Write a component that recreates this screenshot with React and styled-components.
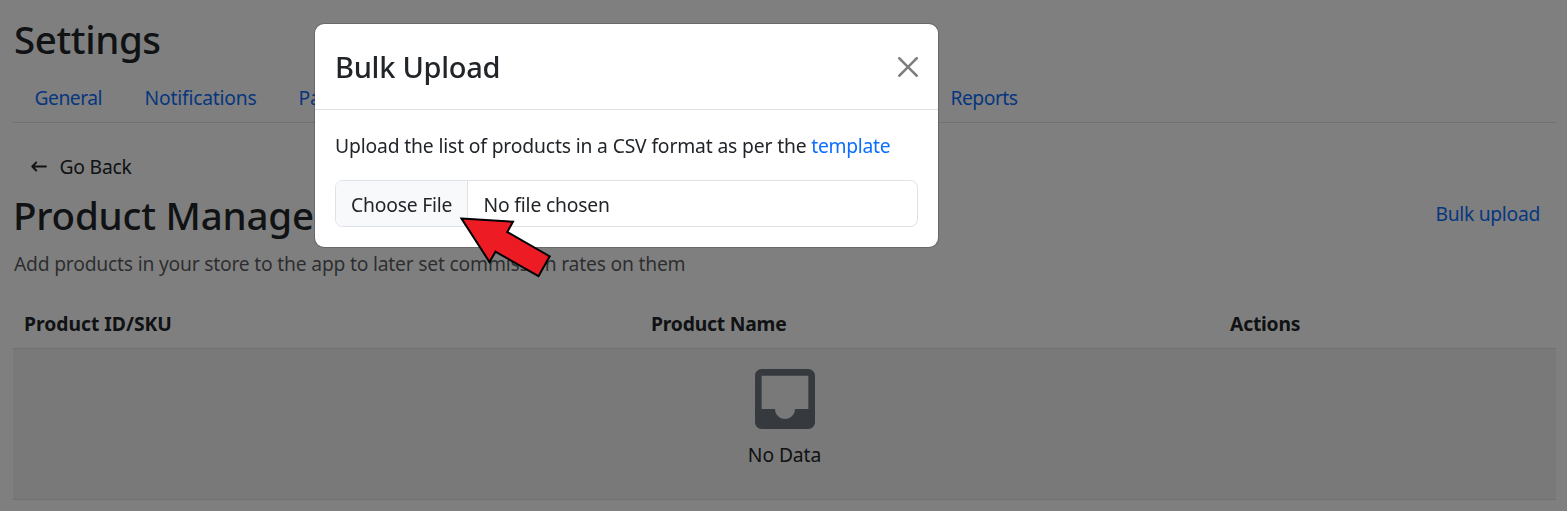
import React from "react";
import styled, { createGlobalStyle } from "styled-components";

const GlobalStyle = createGlobalStyle`
  * { box-sizing: border-box; }
  body {
    margin: 0;
    background: #fff;
    color: #212529;
    font: 400 19.3px/30px "Noto Sans", "Open Sans", sans-serif;
    overflow: hidden;
  }
`;

const Page = styled.main`
  height: 511px;
  padding: 15px 11px 0 13px;
  overflow: hidden;
`;

const Label = styled.span`
  white-space: nowrap;
  letter-spacing: ${(p) => p.$track || 0}px;
`;

const Heading = styled.h1`
  margin: 0;
  padding-left: ${(p) => p.$indent || 0}px;
  font-size: 38.5px;
  font-weight: 500;
  line-height: 48px;
  white-space: nowrap;
  letter-spacing: ${(p) => p.$track || 0}px;
`;

const Tabs = styled.nav`
  display: flex;
  margin-top: 10px;
  border-bottom: 1px solid #dee2e6;
`;

const Tab = styled.a`
  flex: none;
  width: ${(p) => p.$width}px;
  height: 49px;
  padding: 10px 0 0 21.5px;
  color: #0d6efd;
`;

const BackButton = styled.button`
  display: flex;
  align-items: center;
  gap: 12.5px;
  margin-top: 29px;
  padding: 0 0 0 18px;
  border: 0;
  background: none;
  color: inherit;
  font: inherit;
`;

const TitleRow = styled.header`
  display: flex;
  justify-content: space-between;
  align-items: center;
  margin-top: 9px;
`;

const LinkButton = styled.a`
  padding: 0 16px 2px 0;
  color: #0d6efd;
`;

const Hint = styled.p`
  margin: 10px 0 0;
  padding-left: 1px;
  color: rgba(33, 37, 41, 0.75);
`;

const Table = styled.div`
  margin-top: 20px;
`;

const HeadRow = styled.div`
  display: grid;
  grid-template-columns: 627px 579px 1fr;
  height: 50px;
  padding: 10px 0 0 11px;
  border-bottom: 1px solid #dee2e6;
  font-weight: 700;
`;

const EmptyRow = styled.div`
  display: flex;
  flex-direction: column;
  align-items: center;
  gap: 11px;
  height: 151px;
  padding-top: 20px;
  background: #f2f2f2;
  border-bottom: 1px solid #dee2e6;
`;

const Backdrop = styled.div`
  position: fixed;
  inset: 0;
  padding: 23px 0 0 314px;
  background: rgba(0, 0, 0, 0.5);
`;

const Dialog = styled.section`
  width: 625px;
  border: 1px solid rgba(0, 0, 0, 0.175);
  border-radius: 10px;
  background: #fff;
  background-clip: padding-box;
`;

const DialogHeader = styled.header`
  display: flex;
  align-items: center;
  justify-content: space-between;
  height: 86px;
  padding: 0 20px;
  border-bottom: 1px solid #dee2e6;
`;

const DialogTitle = styled.h2`
  margin: 0;
  font-size: 29px;
  font-weight: 500;
  line-height: 45px;
  letter-spacing: ${(p) => p.$track || 0}px;
`;

const DialogBody = styled.div`
  padding: 21px 20px 20px;
`;

const Paragraph = styled.p`
  margin: 0 0 19px;
`;

const TemplateLink = styled.a`
  color: #0d6efd;
  letter-spacing: -0.3px;
`;

const FileField = styled.div`
  display: flex;
  height: 47px;
  border: 1px solid #dee2e6;
  border-radius: 7.5px;
  overflow: hidden;
`;

const FileButton = styled.span`
  flex: none;
  width: 132px;
  padding: 9px 0 0 15px;
  background: #f8f9fa;
  border-right: 1px solid #dee2e6;
`;

const FileName = styled.span`
  padding: 9px 0 0 15.5px;
`;

const Pointer = styled.svg`
  position: fixed;
  left: 455px;
  top: 212px;
`;

const tabs = [
  { name: "General", width: 110, track: -0.5 },
  { name: "Notifications", width: 154, track: -0.2 },
  { name: "Payments", width: 652, track: -0.2 },
  { name: "Reports", width: 110, track: -0.5 },
];

export default function App() {
  return (
    <>
      <GlobalStyle />
      <Page>
        <Heading $indent={1} $track={-0.4}>Settings</Heading>
        <Tabs>
          {tabs.map((t) => (
            <Tab key={t.name} $width={t.width}>
              <Label $track={t.track}>{t.name}</Label>
            </Tab>
          ))}
        </Tabs>
        <BackButton>
          <svg width="16" height="12" viewBox="0 0 16 12" fill="none" stroke="currentColor" strokeWidth="1.8" strokeLinecap="round" strokeLinejoin="round">
            <path d="M5.2 1.5L1.2 5.5l4 4M1.2 5.5h13.8" />
          </svg>
          <Label $track={-0.2}>Go Back</Label>
        </BackButton>
        <TitleRow>
          <Heading $track={-0.2}>Product Management</Heading>
          <LinkButton><Label $track={-0.3}>Bulk upload</Label></LinkButton>
        </TitleRow>
        <Hint><Label $track={-0.21}>Add products in your store to the app to later set commission rates on them</Label></Hint>
        <Table>
          <HeadRow>
            <Label>Product ID/SKU</Label>
            <Label $track={-0.2}>Product Name</Label>
            <Label $track={-0.2}>Actions</Label>
          </HeadRow>
          <EmptyRow>
            <svg width="60" height="60" viewBox="3 3 18 18" fill="#6c757d">
              <path d="M19 3H4.99c-1.11 0-1.98.89-1.98 2L3 19c0 1.1.88 2 1.99 2H19c1.1 0 2-.9 2-2V5c0-1.11-.9-2-2-2zm0 12h-4c0 1.66-1.35 3-3 3s-3-1.34-3-3H4.99V5H19v10z" />
            </svg>
            <Label $track={-0.1}>No Data</Label>
          </EmptyRow>
        </Table>
      </Page>
      <Backdrop>
        <Dialog>
          <DialogHeader>
            <DialogTitle $track={-0.27}>Bulk Upload</DialogTitle>
            <svg width="20" height="20" viewBox="0 0 16 16" fill="#000" opacity="0.5">
              <path d="M.293.293a1 1 0 0 1 1.414 0L8 6.586 14.293.293a1 1 0 1 1 1.414 1.414L9.414 8l6.293 6.293a1 1 0 0 1-1.414 1.414L8 9.414l-6.293 6.293a1 1 0 0 1-1.414-1.414L6.586 8 .293 1.707a1 1 0 0 1 0-1.414z" />
            </svg>
          </DialogHeader>
          <DialogBody>
            <Paragraph>
              <Label $track={-0.15}>Upload the list of products in a CSV format as per the <TemplateLink>template</TemplateLink></Label>
            </Paragraph>
            <FileField>
              <FileButton><Label $track={-0.2}>Choose File</Label></FileButton>
              <FileName><Label $track={-0.17}>No file chosen</Label></FileName>
            </FileField>
          </DialogBody>
        </Dialog>
      </Backdrop>
      <Pointer width="104" height="74" viewBox="455 212 104 74">
        <polygon points="461.5,218.5 513,221.7 507.3,232 549.7,256.3 538.5,276.2 495.5,251.7 489.5,262" fill="#ed1c24" stroke="#000" strokeWidth="2" />
      </Pointer>
    </>
  );
}
